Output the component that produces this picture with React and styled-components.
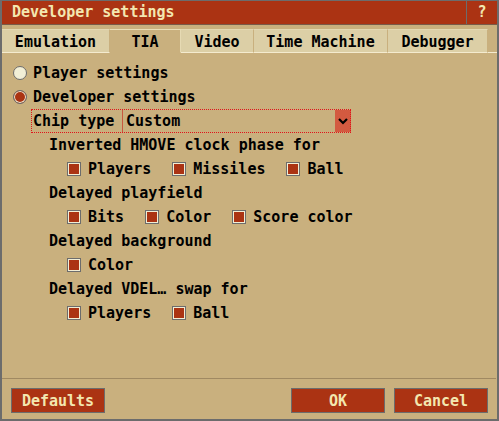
import React from "react";
import styled, { createGlobalStyle } from "styled-components";

const Global = createGlobalStyle`
    html, body { margin: 0; padding: 0; background: #c9b07e; }
    * { box-sizing: border-box; }
`;

const Window = styled.div`
    width: 499px;
    height: 421px;
    display: flex;
    flex-direction: column;
    background: #c9b07e;
    border: 2px solid #6c6c6c;
    border-top-width: 1px;
    font-family: "DejaVu Sans Mono", "Liberation Mono", monospace;
    font-weight: bold;
    font-size: 15px;
    color: #000;
`;

// title bar with the help button
const TitleBar = styled.div`
    height: 24px;
    display: flex;
    align-items: stretch;
    background: #ab3313;
    border-bottom: 1px solid #7a5a48;
    color: #f3e7b0;
`;

const Title = styled.div`
    flex: 1;
    padding-left: 10px;
    line-height: 23px;
`;

const HelpBtn = styled.div`
    width: 31px;
    border-left: 1px solid #6c6c6c;
    text-align: center;
    line-height: 23px;
`;

const TabBar = styled.div`
    display: flex;
    margin-top: 4px;
    height: 24px;
`;

const Tab = styled.div`
    width: ${(p) => p.$w}px;
    height: 24px;
    line-height: 24px;
    text-align: center;
    background: ${(p) => (p.$active ? "#c9b07e" : "#dccfa6")};
    border-top: 1px solid ${(p) => (p.$active ? "#eadfb8" : "#e4d8b2")};
    border-right: 1px solid ${(p) => (p.$active ? "#e6dab3" : "#c9b07e")};
    border-bottom: 1px solid ${(p) => (p.$active ? "#c9b07e" : "#f4ebcf")};
`;

const TabFill = styled.div`
    flex: 1;
    border-bottom: 1px solid #f4ebcf;
`;

const Content = styled.div`
    flex: 1;
    padding-top: 8px;
    display: flex;
    flex-direction: column;
`;

const Row = styled.div`
    height: 24px;
    display: flex;
    align-items: center;
    padding-left: ${(p) => p.$indent || 0}px;
    gap: ${(p) => p.$gap || 0}px;
`;

const Radio = styled.span`
    width: 14px;
    height: 14px;
    border-radius: 50%;
    border: 1px solid #6c6c6c;
    box-shadow: inset 0 0 0 1px #f2edd4;
    background: ${(p) => (p.$on ? "#ab3313" : "#f2efd6")};
    margin-right: 6px;
`;

const Check = styled.label`
    display: flex;
    align-items: center;
`;

const Box = styled.span`
    width: 14px;
    height: 14px;
    border: 1px solid #6c6c6c;
    box-shadow: inset 0 0 0 1px #f2edd4;
    background: #ab3313;
    margin-right: 7px;
`;

const ChipRow = styled.div`
    height: 24px;
    width: 320px;
    margin-left: 29px;
    display: flex;
    align-items: stretch;
    outline: 1px dotted #e0141a;
    outline-offset: -1px;
    padding: 1px 0;
`;

const ChipLabel = styled.span`
    width: 91px;
    padding-left: 2px;
    line-height: 22px;
`;

const Select = styled.div`
    flex: 1;
    display: flex;
    border-left: 1px solid #c8583f;
`;

const SelectText = styled.span`
    flex: 1;
    padding-left: 3px;
    line-height: 22px;
`;

const Arrow = styled.span`
    width: 16px;
    background: #d35a40;
    display: flex;
    align-items: center;
    justify-content: center;
`;

const Footer = styled.div`
    border-top: 1px solid #a08962;
    margin-right: 1px;
    padding: 9px 8px 6px 9px;
    display: flex;
    gap: 9px;
`;

const Button = styled.button`
    width: 94px;
    height: 25px;
    padding: 0;
    background: #ab3313;
    border: 1px solid #6c6c6c;
    color: #f3e7b0;
    font: inherit;
    font-weight: bold;
    margin-left: ${(p) => (p.$push ? "auto" : "0")};
`;

const tabs = [
    ["Emulation", 108],
    ["TIA", 71],
    ["Video", 73],
    ["Time Machine", 134],
    ["Debugger", 100],
];

const CheckRow = ({ items }) => (
    <Row $indent={65} $gap={21}>
        {items.map((t) => (
            <Check key={t}>
                <Box />
                {t}
            </Check>
        ))}
    </Row>
);

const App = () => (
    <>
        <Global />
        <Window>
            <TitleBar>
                <Title>Developer settings</Title>
                <HelpBtn>?</HelpBtn>
            </TitleBar>
            <TabBar>
                {tabs.map(([t, w]) => (
                    <Tab key={t} $w={w} $active={t === "TIA"}>{t}</Tab>
                ))}
                <TabFill />
            </TabBar>
            <Content>
                <Row $indent={11}><Radio />Player settings</Row>
                <Row $indent={11}><Radio $on />Developer settings</Row>
                <ChipRow>
                    <ChipLabel>Chip type</ChipLabel>
                    <Select>
                        <SelectText>Custom</SelectText>
                        <Arrow>
                            <svg width="10" height="7" viewBox="0 0 10 7">
                                <path d="M1 1 L5 5 L9 1" fill="none" stroke="#000" strokeWidth="2.2" />
                            </svg>
                        </Arrow>
                    </Select>
                </ChipRow>
                <Row $indent={47}>Inverted HMOVE clock phase for</Row>
                <CheckRow items={["Players", "Missiles", "Ball"]} />
                <Row $indent={47}>Delayed playfield</Row>
                <CheckRow items={["Bits", "Color", "Score color"]} />
                <Row $indent={47}>Delayed background</Row>
                <CheckRow items={["Color"]} />
                <Row $indent={47}>Delayed VDEL… swap for</Row>
                <CheckRow items={["Players", "Ball"]} />
            </Content>
            <Footer>
                <Button>Defaults</Button>
                <Button $push>OK</Button>
                <Button>Cancel</Button>
            </Footer>
        </Window>
    </>
);

export default App;
